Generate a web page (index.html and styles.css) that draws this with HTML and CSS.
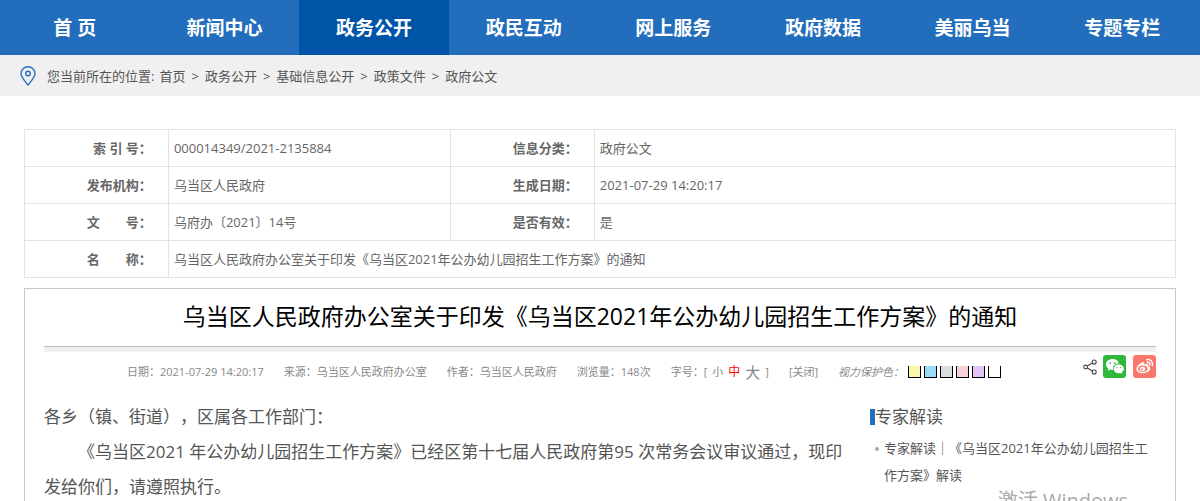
FILE: index.html
```html
<!DOCTYPE html>
<html lang="zh-CN">
<head>
<meta charset="utf-8">
<title>政府公文</title>
<link rel="stylesheet" href="styles.css">
</head>
<body>
<nav class="nav">
  <a href="#">首 页</a>
  <a href="#">新闻中心</a>
  <a href="#" class="active">政务公开</a>
  <a href="#">政民互动</a>
  <a href="#">网上服务</a>
  <a href="#">政府数据</a>
  <a href="#">美丽乌当</a>
  <a href="#">专题专栏</a>
</nav>
<div class="crumbs">
  <svg class="pin" width="16" height="20" viewBox="0 0 16 20" fill="none" stroke="#2a6fbf" stroke-width="1.4"><path d="M8 19C5 15 1 11.5 1 7.6a7 6.8 0 0 1 14 0C15 11.500 11 15 8 19z"/><circle cx="8" cy="7.500" r="2.300"/></svg>
  <span>您当前所在的位置:</span>
  <a href="#">首页</a><span class="sep">&gt;</span>
  <a href="#">政务公开</a><span class="sep">&gt;</span>
  <a href="#">基础信息公开</a><span class="sep">&gt;</span>
  <a href="#">政策文件</a><span class="sep">&gt;</span>
  <a href="#">政府公文</a>
</div>
<main class="page">
  <table class="info">
    <colgroup><col class="col-label"><col class="col-value"><col class="col-label"><col></colgroup>
    <tr><th scope="row">索 引 号：</th><td>000014349/2021-2135884</td><th scope="row">信息分类：</th><td>政府公文</td></tr>
    <tr><th scope="row">发布机构：</th><td>乌当区人民政府</td><th scope="row">生成日期：</th><td>2021-07-29 14:20:17</td></tr>
    <tr><th scope="row">文　　号：</th><td>乌府办〔2021〕14号</td><th scope="row">是否有效：</th><td>是</td></tr>
    <tr><th scope="row">名　　称：</th><td colspan="3">乌当区人民政府办公室关于印发《乌当区2021年公办幼儿园招生工作方案》的通知</td></tr>
  </table>
  <article class="card">
    <h1>乌当区人民政府办公室关于印发《乌当区2021年公办幼儿园招生工作方案》的通知</h1>
    <div class="meta">
      <span>日期：2021-07-29 14:20:17</span>
      <span>来源：乌当区人民政府办公室</span>
      <span>作者：乌当区人民政府</span>
      <span>浏览量：148次</span>
      <span class="sizes">字号：[ <button>小</button><button class="on">中</button><button class="big">大</button> ]</span>
      <a href="#">[关闭]</a>
      <em>视力保护色：</em>
      <span class="swatches">
        <button class="yellow" aria-label="黄色"></button>
        <button class="blue" aria-label="蓝色"></button>
        <button class="gray" aria-label="灰色"></button>
        <button class="pink" aria-label="粉色"></button>
        <button class="purple" aria-label="紫色"></button>
        <button class="white" aria-label="白色"></button>
      </span>
      <span class="share">
        <svg width="14" height="16" viewBox="0 0 14 16" fill="none" stroke="#444" stroke-width="1.100"><circle cx="2.600" cy="8" r="1.900"/><circle cx="11.200" cy="3" r="2"/><circle cx="11.200" cy="13" r="2"/><path d="M4.300 7l5.100-3M4.300 9l5.100 3"/></svg>
        <button class="icon wechat" aria-label="微信"><svg width="23" height="23" viewBox="0 0 23 23"><path fill="#fff" d="M9.500 4C5.800 4 3 6.400 3 9.400c0 1.700.9 3.200 2.400 4.200l-.7 2.100 2.500-1.300c.8.2 1.500.3 2.300.3h.6c-.1-.4-.2-.8-.2-1.200 0-2.800 2.600-4.900 5.700-4.900h.4C15.500 5.900 12.800 4 9.500 4z"/><path fill="#fff" d="M15.700 9.500c-3 0-5.100 2-5.100 4.300 0 2.500 2.200 4.400 5.100 4.400.6 0 1.200-.1 1.800-.3l1.900 1.100-.5-1.800c1.300-.9 2-2.100 2-3.400 0-2.400-2.300-4.300-5.200-4.300z"/><g fill="#2fb83a"><circle cx="7.300" cy="7.900" r=".9"/><circle cx="11.600" cy="7.900" r=".9"/><circle cx="14" cy="12.600" r=".7"/><circle cx="17.400" cy="12.600" r=".7"/></g></svg></button>
        <button class="icon weibo" aria-label="微博"><svg width="23" height="23" viewBox="0 0 23 23"><path fill="#fff" d="M9.700 7.300c-2.500.6-6.300 4-6.300 6.900 0 2.400 2.900 4 6.300 4 4.500 0 7.500-2.400 7.500-4.600 0-1.300-1-2-1.900-2.300.5-1.400.1-2.400-1.300-2.400-.9 0-2 .4-2.700.7.400-1.400.1-2.700-1.600-2.300z"/><ellipse cx="9.800" cy="13.800" rx="4.700" ry="3.200" fill="#f9776b"/><ellipse cx="9.500" cy="14" rx="2.700" ry="2.300" fill="#fff"/><circle cx="8.900" cy="14.500" r="1" fill="#f9776b"/><path d="M14.200 7.300c1.800-.4 3.200.9 2.700 2.900M13.800 4.700c3.400-.8 6.400 1.900 5.600 5.800" fill="none" stroke="#fff" stroke-width="1.400" stroke-linecap="round"/></svg></button>
      </span>
    </div>
    <div class="columns">
      <div class="text">
        <p>各乡（镇、街道），区属各工作部门：</p>
        <p class="indent">《乌当区2021 年公办幼儿园招生工作方案》已经区第十七届人民政府第95 次常务会议审议通过，现印发给你们，请遵照执行。</p>
      </div>
      <aside class="side">
        <h2>专家解读</h2>
        <ul><li><a href="#">专家解读｜《乌当区2021年公办幼儿园招生工作方案》解读</a></li></ul>
      </aside>
    </div>
  </article>
</main>
<div class="watermark">激活 Windows</div>
</body>
</html>
```
FILE: styles.css
```css
* { box-sizing: border-box; }
body {
  margin: 0;
  height: 100vh;
  display: flex;
  flex-direction: column;
  position: relative;
  overflow: hidden;
  background: #fff;
  color: #555;
  font: 13px/20px "Open Sans", "Noto Sans CJK SC", sans-serif;
  text-spacing-trim: space-all;
}
a { color: inherit; text-decoration: none; }
button { padding: 0; border: 0; background: none; font: inherit; color: inherit; cursor: pointer; }
h1, h2, p, ul { margin: 0; padding: 0; font-weight: 400; }

.nav { flex: none; display: flex; padding-right: 3px; background: #226dbc; }
.nav a { flex: 1; padding-top: 2px; text-align: center; color: #fff; font-size: 19px; font-weight: 700; line-height: 53px; }
.nav .active { background: #0054a8; }

.crumbs { flex: none; display: flex; align-items: center; height: 41px; padding-left: 20px; background: #f0f0f0; color: #555; }
.crumbs .pin { margin-right: 11px; }
.crumbs a { margin-left: 5px; }
.crumbs .sep { margin: 0 1px 0 6px; }

.page { flex: 1; display: flex; flex-direction: column; gap: 10px; padding: 33px 24px 0; }

.info { width: 100%; border-collapse: collapse; table-layout: fixed; color: #666; }
.info .col-label { width: 12.5%; }
.info .col-value { width: 24.5%; }
.info th, .info td { height: 37px; padding: 0 5px; border: 1px solid #e2e2e2; text-align: left; }
.info th { padding-right: 16px; text-align: right; font-weight: 700; white-space: pre; }

.card { flex: 1; padding: 0 19px; border: 1px solid #c8c8c8; border-bottom: 0; }
.card h1 { padding: 11px 0 14px; text-align: center; color: #000; font-size: 23px; line-height: 32px; border-bottom: 1px solid #bbb; }
.meta { display: flex; align-items: center; gap: 20px; height: 44px; padding-left: 83px; border-top: 5px solid #f0f0f0; color: #888; font-size: 11px; white-space: nowrap; }
.sizes { display: flex; align-items: center; gap: 5px; }
.sizes .on { color: #f00; font-size: 12px; }
.sizes .big { font-size: 15px; }
.swatches { display: flex; gap: 3px; margin-left: -16px; }
.swatches button { width: 13px; height: 12px; border: 1px solid #000; border-top: 0; }
.swatches .yellow { background: #f8f8a8; }
.swatches .blue { background: #98dcf8; }
.swatches .gray { background: #dcdcdc; }
.swatches .pink { background: #f8d0d8; }
.swatches .purple { background: #e0c4f8; }
.swatches .white { background: #fff; }
.share { display: flex; align-items: center; gap: 6px; margin: 0 0 10px auto; }
.icon { width: 23px; height: 23px; border-radius: 3px; }
.icon svg { display: block; }
.wechat { background: #2fb83a; }
.weibo { background: #f9776b; margin-left: 1px; }

.columns { display: flex; gap: 19px; padding-top: 8px; }
.text { flex: 1; color: #555; font-size: 17px; line-height: 35px; }
.indent { text-indent: 2em; }
.side { width: 286px; }
.side h2 { display: flex; align-items: center; font-size: 17px; line-height: 36px; color: #555; }
.side h2::before { content: ""; width: 5px; height: 16px; background: #226dbc; }
.side li { display: flex; gap: 5px; line-height: 27px; color: #555; }
.side li::before { content: ""; flex: none; width: 4px; height: 4px; margin: 12px 0 0 5px; border-radius: 50%; background: #aaa; }

.watermark { position: absolute; right: 72px; bottom: -14px; color: #aaa; font-size: 20px; line-height: 28px; }
```
